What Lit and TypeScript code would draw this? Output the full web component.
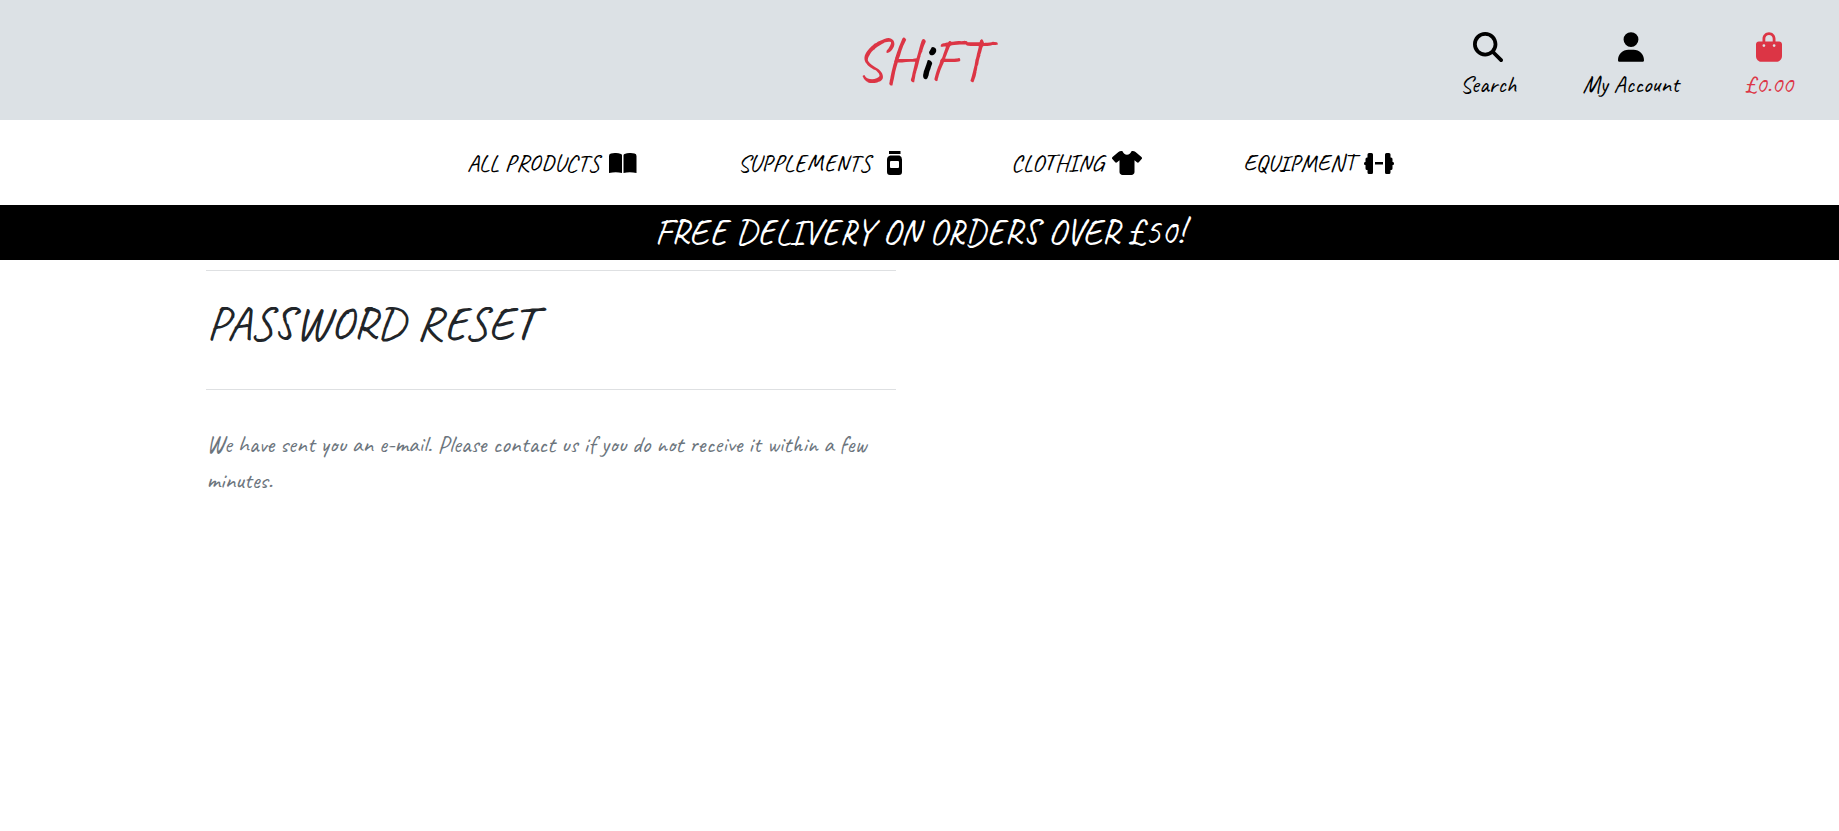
import { LitElement, html, css, svg } from "lit";
import { customElement } from "lit/decorators.js";

const icons = {
  search: svg`<path d="M416 208c0 45.900-14.900 88.300-40 122.700L502.600 457.400c12.500 12.500 12.500 32.800 0 45.300s-32.800 12.500-45.300 0L330.700 376c-34.400 25.200-76.800 40-122.700 40C93.100 416 0 322.900 0 208S93.100 0 208 0S416 93.100 416 208zM208 352a144 144 0 1 0 0-288 144 144 0 1 0 0 288z"/>`,
  user: svg`<path d="M224 256A128 128 0 1 0 224 0a128 128 0 1 0 0 256zm-45.700 48C79.800 304 0 383.800 0 482.300C0 498.700 13.300 512 29.700 512H418.300c16.400 0 29.700-13.300 29.700-29.700C448 383.800 368.200 304 269.700 304H178.300z"/>`,
  bag: svg`<path d="M160 112c0-35.300 28.700-64 64-64s64 28.700 64 64v48H160V112zm-48 48H48c-26.500 0-48 21.500-48 48V416c0 53 43 96 96 96H352c53 0 96-43 96-96V208c0-26.500-21.500-48-48-48H336V112C336 50.100 285.900 0 224 0S112 50.100 112 112v48zm24 48a24 24 0 1 1 0 48 24 24 0 1 1 0-48zm152 24a24 24 0 1 1 48 0 24 24 0 1 1-48 0z"/>`,
  book: svg`<path d="M0 3Q0 1 2 .6Q7 -.8 12 1Q13 1.400 13 2.500V20Q7 18.500 0 20ZM14.500 2.500Q14.500 1.400 15.500 1Q20.500 -.8 25.500 .6Q27.500 1 27.500 3V20Q20.500 18.500 14.500 20Z"/>`,
  jar: svg`<path fill-rule="evenodd" d="M2 0h11.500v3H2ZM3 4.500h9.500q2.500 1 2.500 4v12.500q0 3-3 3H3q-3 0-3-3V8.500q0-3 3-4ZM4 10q-1 0-1 1v5q0 1 1 1h7q1 0 1-1v-5q0-1-1-1Z"/>`,
  shirt: svg`<path d="M211.800 0c7.800 0 14.300 5.700 16.700 13.200C240.800 51.900 277.100 80 320 80s79.200-28.100 91.500-66.800C413.900 5.700 420.400 0 428.200 0h12.600c22.500 0 44.200 7.900 61.500 22.300L628.500 127.400c6.600 5.500 10.700 13.500 11.400 22.100s-2.100 17.100-7.800 23.600l-56 64c-11.400 13.100-31.200 14.600-44.600 3.500L480 197.700V448c0 35.300-28.700 64-64 64H224c-35.300 0-64-28.700-64-64V197.700l-51.500 42.900c-13.300 11.100-33.100 9.600-44.600-3.500l-56-64c-5.700-6.500-8.500-15-7.800-23.600s4.800-16.600 11.400-22.100L137.700 22.300C155 7.900 176.700 0 199.200 0h12.600z"/>`,
  weights: svg`<path d="M3.500 1.500Q3.500 0 5 0H7.500Q9 0 9 1.500V19.500Q9 21 7.500 21H5Q3.500 21 3.500 19.500V17H3Q1.500 17 1.500 15.500V12H1Q0 12 0 10.500T1 9H1.500V6Q1.500 4.500 3 4.500H3.500ZM11 9h8v2.500h-8ZM26.500 1.500Q26.500 0 25 0H22.500Q21 0 21 1.500V19.500Q21 21 22.500 21H25Q26.500 21 26.500 19.500V17H27Q28.500 17 28.500 15.500V12H29Q30 12 30 10.500T29 9H28.500V6Q28.500 4.500 27 4.500H26.500Z"/>`,
};

const glyph = (name: keyof typeof icons, w: number, h: number, box = `0 0 ${w} ${h}`) =>
  html`<svg width=${w} height=${h} viewBox=${box} aria-hidden="true">${icons[name]}</svg>`;

@customElement("app-root")
export class AppRoot extends LitElement {
  static styles = css`
    :host {
      display: block;
      min-height: 100vh;
      background: #fff;
      color: #212529;
      font-family: Caveat, cursive;
    }
    svg { display: block; fill: currentColor; }
    a { color: #000; text-decoration: none; }
    .top {
      display: grid;
      grid-template-columns: 1fr auto 1fr;
      align-items: center;
      height: 120px;
      padding: 0 46px;
      background: #dce1e5;
      box-sizing: border-box;
    }
    .logo { grid-column: 2; font-size: 60px; line-height: 64px; font-weight: 500; color: #dc3545; }
    .dot { color: #000; font-weight: 700; }
    .tools { display: flex; justify-content: flex-end; gap: 66px; padding-top: 8px; }
    .tool {
      display: flex;
      flex-direction: column;
      align-items: center;
      gap: 10px;
      font-size: 24px;
      line-height: 24px;
    }
    .total { color: #dc3545; }
    .menu {
      display: flex;
      justify-content: center;
      gap: 101px;
      padding: 31px 0 30px 22px;
      font-size: 24px;
      line-height: 24px;
      font-weight: 500;
    }
    .item { display: flex; align-items: center; gap: 9px; }
    .banner {
      margin: 0;
      padding: 9px 0 10px;
      background: #000;
      color: #fff;
      text-align: center;
      font-size: 36px;
      line-height: 36px;
      font-weight: 500;
    }
    .content {
      display: grid;
      grid-template-columns: 1fr 1fr;
      gap: 48px;
      max-width: 1428px;
      margin: 0 auto;
      padding-top: 10px;
    }
    .title {
      margin: 0;
      padding: 28px 1px 42px;
      border: solid #dee0e2;
      border-width: 1px 0;
      font-size: 48px;
      line-height: 48px;
      font-weight: 500;
    }
    .note {
      margin: 36px 0 0;
      padding: 0 1px;
      color: #6c757d;
      font-size: 24px;
      line-height: 36px;
    }
  `;

  render() {
    return html`
      <header class="top">
        <a class="logo" href="#">SH<span class="dot">i</span>FT</a>
        <div class="tools">
          <a class="tool" href="#search">${glyph("search", 30, 30, "0 0 512 512")}<span>Search</span></a>
          <a class="tool" href="#account">${glyph("user", 26, 30, "0 0 448 512")}<span>My Account</span></a>
          <a class="tool total" href="#bag">${glyph("bag", 26, 30, "0 0 448 512")}<span>£0.00</span></a>
        </div>
      </header>
      <nav class="menu">
        <a class="item" href="#all">ALL PRODUCTS ${glyph("book", 28, 20)}</a>
        <a class="item" href="#supplements">SUPPLEMENTS ${glyph("jar", 30, 24, "-7 0 30 24")}</a>
        <a class="item" href="#clothing">CLOTHING ${glyph("shirt", 30, 24, "0 0 640 512")}</a>
        <a class="item" href="#equipment">EQUIPMENT ${glyph("weights", 30, 21)}</a>
      </nav>
      <p class="banner">FREE DELIVERY ON ORDERS OVER £50!</p>
      <main class="content">
        <section>
          <h1 class="title">PASSWORD RESET</h1>
          <p class="note">We have sent you an e-mail. Please contact us if you do not receive it within a few minutes.</p>
        </section>
      </main>
    `;
  }
}
